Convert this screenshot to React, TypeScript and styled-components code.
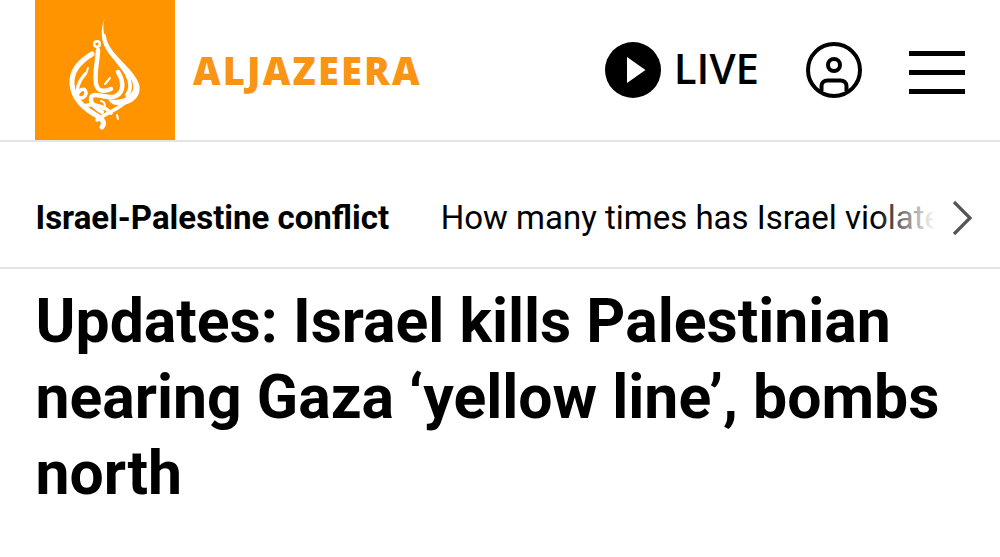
import React from "react";
import styled, { createGlobalStyle } from "styled-components";
import { ChevronRight } from "lucide-react";

const GlobalStyle = createGlobalStyle`
  html, body {
    margin: 0;
    padding: 0;
    background: #fff;
  }
`;

const Logo: React.FC = () => (
  <svg width="140" height="140" viewBox="35 0 140 140" fill="none" stroke="#fff" strokeLinecap="round" strokeLinejoin="round">
    <path
      d="M106.5 15 C101 24 103 36 110 47 C118 60 134 70 139 84 C142 95 134 104 122 105 C114 106 110 103 108 99 C116 101 128 100 133 90 C136 78 120 66 110 55 C102 45 98 30 106.5 15 Z"
      fill="#fff"
      stroke="none"
    />
    <path d="M104 36 C105 50 120 62 127 74 C131 82 131 90 127 95" strokeWidth="4" />
    <path d="M98 50 C98 60 94 72 96 84 C98 92 104 92 111 89" strokeWidth="4.5" />
    <circle cx="97" cy="44" r="2.8" strokeWidth="2.4" />
    <path d="M92 54 C82 60 71 70 72 84 C73 98 84 108 94 114 C102 119 106 122 102 127" strokeWidth="5" />
    <path d="M85 74 C78 82 76 90 78 97 C83 100 88 95 85 90 C83 88 80 90 78 93" strokeWidth="3.4" />
    <path d="M118 72 C124 82 124 92 116 96 C106 100 96 92 92 96 C88 102 96 108 102 112" strokeWidth="4.5" />
    <path d="M84 106 C94 103 104 106 111 113 M97 120 C106 113 118 110 128 100" strokeWidth="3.6" />
    <path d="M88 68 L86 74 M110 78 L105 84 M117 115 L118 119 M101 101 C106 102 106 108 102 110" strokeWidth="2" />
  </svg>
);

const UserIcon: React.FC = () => (
  <svg width="58" height="58" viewBox="0 0 58 58" fill="none" stroke="#000" strokeWidth="4">
    <circle cx="29" cy="29" r="26" />
    <circle cx="29" cy="24" r="6" />
    <path d="M16.5 50 V45 C16.5 41.5 19 39.5 22.5 39.5 H35.5 C39 39.5 41.5 41.5 41.5 45 V50" />
  </svg>
);

const PlayIcon: React.FC = () => (
  <svg width="56" height="56" viewBox="0 0 56 56">
    <circle cx="28" cy="28" r="28" fill="#000" />
    <path d="M22 15 L40.5 28 L22 41 Z" fill="#fff" />
  </svg>
);

const Page: React.FC = () => (
  <Wrapper>
    <Header>
      <Brand>
        <LogoSquare>
          <Logo />
        </LogoSquare>
        <Wordmark>ALJAZEERA</Wordmark>
      </Brand>
      <Actions>
        <LiveLink>
          <PlayIcon />
          <LiveLabel>LIVE</LiveLabel>
        </LiveLink>
        <UserIcon />
        <Burger>
          <BurgerLine />
          <BurgerLine />
          <BurgerLine />
        </Burger>
      </Actions>
    </Header>
    <TopicBar>
      <TopicName>Israel-Palestine conflict</TopicName>
      <TopicScroller>
        <TopicLink>How many times has Israel violated the ceasefire</TopicLink>
        <TopicFade />
      </TopicScroller>
      <TopicArrow>
        <ChevronRight size={64} strokeWidth={1.2} color="#555" strokeLinecap="butt" strokeLinejoin="miter" />
      </TopicArrow>
    </TopicBar>
    <Headline>Updates: Israel kills Palestinian nearing Gaza ‘yellow line’, bombs north</Headline>
  </Wrapper>
);

const Wrapper = styled.div`
  width: 1000px;
  height: 557px;
  overflow: hidden;
  background: #fff;
  font-family: Roboto, "Liberation Sans", sans-serif;
  color: #000;
`;

const Header = styled.header`
  height: 140px;
  display: flex;
  align-items: center;
  justify-content: space-between;
  padding: 0 35px;
  border-bottom: 2px solid #e4e4e4;
`;

const Brand = styled.div`
  display: flex;
  align-items: center;
  gap: 18px;
`;

const LogoSquare = styled.div`
  width: 140px;
  height: 140px;
  background: #ff9300;
`;

const Wordmark = styled.span`
  font-family: "Open Sans", sans-serif;
  font-weight: 800;
  font-size: 38px;
  letter-spacing: 2.2px;
  color: #fa9414;
`;

const Actions = styled.div`
  display: flex;
  align-items: center;
`;

const LiveLink = styled.div`
  display: flex;
  align-items: center;
  gap: 13px;
  margin-right: 46px;
`;

const LiveLabel = styled.span`
  font-family: "Open Sans", sans-serif;
  font-weight: 600;
  font-size: 42px;
  line-height: 56px;
  margin-top: -4px;
`;

const Burger = styled.div`
  width: 56px;
  height: 43px;
  margin: 5px 0 0 46px;
  display: flex;
  flex-direction: column;
  justify-content: space-between;
`;

const BurgerLine = styled.span`
  display: block;
  height: 5px;
  background: #000;
`;

const TopicBar = styled.nav`
  height: 127px;
  box-sizing: border-box;
  display: flex;
  align-items: center;
  padding: 26px 0 0 35.5px;
  border-bottom: 2px solid #e4e4e4;
  font-size: 33px;
`;

const TopicName = styled.h2`
  margin: 0;
  font-size: 33px;
  font-weight: 700;
  white-space: nowrap;
`;

const TopicScroller = styled.div`
  position: relative;
  width: 494px;
  margin-left: 51.5px;
  overflow: hidden;
  white-space: nowrap;
`;

const TopicLink = styled.span`
  font-weight: 400;
`;

const TopicFade = styled.div`
  position: absolute;
  top: 0;
  right: 0;
  bottom: 0;
  width: 60px;
  background: linear-gradient(to right, rgba(255, 255, 255, 0), #fff);
`;

const TopicArrow = styled.div`
  display: flex;
  width: 64px;
  margin-left: -5px;
`;

const Headline = styled.h1`
  margin: 15px 35.5px 0;
  font-size: 60.7px;
  line-height: 76px;
  font-weight: 700;
`;

export default function App() {
  return (
    <>
      <GlobalStyle />
      <Page />
    </>
  );
}
